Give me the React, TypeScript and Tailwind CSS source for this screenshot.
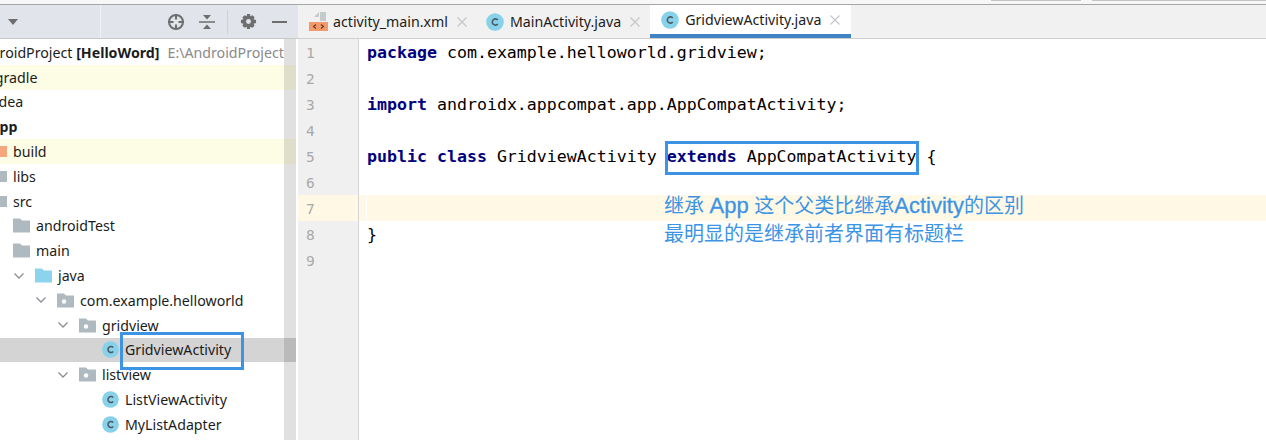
import { ReactNode } from 'react'

const uiFont = { fontFamily: '"Noto Sans", "Liberation Sans", sans-serif' }

function ClassIcon({ size = 17 }: { size?: number }) {
  return (
    <svg width={size} height={size} viewBox="0 0 18 18" className="shrink-0">
      <circle cx="9" cy="9" r="8.8" fill="#87d1ea" />
      <path d="M11.8 7A3.1 3.1 0 1 0 11.8 11" fill="none" stroke="#4d5a60" strokeWidth="1.6" />
    </svg>
  )
}

function Folder({ color = '#afb9c0', dot = false }: { color?: string; dot?: boolean }) {
  return (
    <svg width="17" height="15" viewBox="0 0 17 15" className="shrink-0">
      <path d="M0 0.5H7L9 2.5H17V14.5H0Z" fill={color} />
      {dot && <circle cx="7" cy="8.5" r="2.2" fill="#fff" />}
    </svg>
  )
}

function Chevron() {
  return (
    <svg width="12" height="8" viewBox="0 0 12 8" className="mr-[10px] shrink-0">
      <path d="M1.5 1.5L6 6L10.5 1.5" fill="none" stroke="#8a8f94" strokeWidth="1.3" />
    </svg>
  )
}

function Row({ className, children }: { className: string; children: ReactNode }) {
  return <div className={`flex h-[24.8px] items-center whitespace-nowrap text-[14.2px] text-[#1c1c1c] ${className}`}>{children}</div>
}

function CloseX({ gap }: { gap: string }) {
  return (
    <svg width="10" height="10" viewBox="0 0 10 10" className={`shrink-0 ${gap}`}>
      <path d="M0.5 0.5L9.5 9.5M9.5 0.5L0.5 9.5" stroke="#c4c6c9" strokeWidth="1.2" />
    </svg>
  )
}

function XmlIcon() {
  return (
    <svg width="19" height="19" viewBox="0 0 19 19" className="shrink-0">
      <path d="M5 9V5L10 0V5H5Z" fill="#c5cacd" />
      <rect x="11" y="0" width="6" height="9" fill="#c5cacd" />
      <rect x="0" y="10" width="19" height="9" fill="#f4996b" />
      <path d="M7 12.5L4.5 14.5L7 16.5M12 12.5L14.5 14.5L12 16.5" fill="none" stroke="#5b3a28" strokeWidth="1.1" />
    </svg>
  )
}

function CodeLine({ n, current, children }: { n: number; current?: boolean; children?: ReactNode }) {
  return (
    <div className={`flex h-[26px] ${current ? 'bg-[#fff8e4]' : ''}`}>
      <div className={`h-full w-[61px] shrink-0 border-r-[1px] border-[#d5d5d5] pl-[8px] pt-[1px] text-[14.5px] leading-[26px] text-[#a9a9a9] ${current ? '' : 'bg-[#f0f0f0]'}`}>{n}</div>
      <div className={`h-full w-[8px] shrink-0 border-r-[1px] ${current ? 'border-white' : 'border-transparent'}`} />
      <div className="h-full flex-1 pt-[1px] leading-[26px] whitespace-pre">{children}</div>
    </div>
  )
}

const kw = 'font-bold text-[#000080]'
const latin = 'text-[22px] [-webkit-text-stroke:0.3px_#3d94e4]'

export default function App() {
  return (
    <div className="relative h-[440px] w-[1266px] overflow-hidden bg-white" style={uiFont}>
      {/* top strip, bottoms of the toolbar buttons */}
      <div className="flex h-[5px] items-start border-b-[1px] border-[#a6a6a6] bg-[#f7f7f7]">
        <div className="ml-[991px] h-[1px] w-[90px] bg-[#c4c4c4]" />
        <div className="ml-[11px] h-[1px] flex-1 bg-[#c4c4c4]" />
      </div>
      <div className="flex">
        {/* project panel */}
        <div className="w-[298px] shrink-0">
          <div className="flex h-[34px] items-center border-b-[1px] border-[#c9c9c9] bg-[#e1e4eb]">
            <svg width="10" height="6" viewBox="0 0 10 6" className="ml-[8px]"><path d="M0 0H10L5 6Z" fill="#6e6e6e" /></svg>
            <div className="ml-[82px] h-full w-[1px] bg-[#f0f1f4]" />
            <svg width="18" height="18" viewBox="0 0 18 18" className="ml-[66px]">
              <circle cx="9" cy="9" r="7" fill="none" stroke="#6e6e6e" strokeWidth="2" />
              <path d="M9 1V6.5M9 11.5V17M1 9H6.5M11.5 9H17" stroke="#6e6e6e" strokeWidth="2" />
            </svg>
            <svg width="16" height="16" viewBox="0 0 16 16" className="ml-[14px]">
              <path d="M0 8H16" stroke="#6e6e6e" strokeWidth="1.5" />
              <path d="M4 1H12L8 5.5ZM4 15H12L8 10.5Z" fill="#6e6e6e" />
            </svg>
            <div className="ml-[12px] h-[24px] w-[1px] bg-[#cdd0d6]" />
            <svg width="17" height="17" viewBox="0 0 18 18" className="ml-[12px]">
              <path d="M7.5 1H10.5L11 3.4L13 2.3L15.5 4.6L14.4 6.7L17 7.3V10.7L14.4 11.3L15.5 13.4L13 15.7L11 14.6L10.5 17H7.5L7 14.6L5 15.7L2.5 13.4L3.6 11.3L1 10.7V7.3L3.6 6.7L2.5 4.6L5 2.3L7 3.4Z" fill="#6e6e6e" />
              <circle cx="9" cy="9" r="2.6" fill="#e1e4eb" />
            </svg>
            <div className="ml-[15px] h-[2px] w-[15px] bg-[#6e6e6e]" />
          </div>
          <div className="relative h-[401px] w-[296px] overflow-hidden pt-[1px]">
            <Row className="">
              <span className="-ml-[27px]">AndroidProject <b>[HelloWord]</b></span>
              <span className="ml-[8px] text-[#8a8a8a]">E:\AndroidProject</span>
            </Row>
            <Row className="bg-[#fdfde6]"><span className="-ml-[9px]">.gradle</span></Row>
            <Row className=""><span className="-ml-[9px]">.idea</span></Row>
            <Row className=""><b className="-ml-[9px]">app</b></Row>
            <Row className="bg-[#fdfde6]">
              <span className="h-[11px] w-[7px] bg-[#f4a77a]" />
              <span className="ml-[6px]">build</span>
            </Row>
            <Row className=""><span className="h-[11px] w-[7px] bg-[#afb9c0]" /><span className="ml-[6px]">libs</span></Row>
            <Row className=""><span className="h-[11px] w-[7px] bg-[#afb9c0]" /><span className="ml-[6px]">src</span></Row>
            <Row className="pl-[13px] gap-[6px]"><Folder /><span>androidTest</span></Row>
            <Row className="pl-[13px] gap-[6px]"><Folder /><span>main</span></Row>
            <Row className="pl-[13px]"><Chevron /><Folder color="#8cd3ee" /><span className="ml-[6px]">java</span></Row>
            <Row className="pl-[35px]"><Chevron /><Folder dot /><span className="ml-[6px]">com.example.helloworld</span></Row>
            <Row className="pl-[57px]"><Chevron /><Folder dot /><span className="ml-[6px]">gridview</span></Row>
            <Row className="bg-[#d4d4d4] pl-[102px] gap-[6px]"><ClassIcon /><span>GridviewActivity</span></Row>
            <Row className="pl-[57px]"><Chevron /><Folder dot /><span className="ml-[6px]">listview</span></Row>
            <Row className="pl-[102px] gap-[6px]"><ClassIcon /><span>ListViewActivity</span></Row>
            <Row className="pl-[102px] gap-[6px]"><ClassIcon /><span>MyListAdapter</span></Row>
            {/* scrollbar track sits over the rows */}
            <div className="absolute right-0 top-0 h-full w-[12px] bg-black/[0.12]" />
          </div>
        </div>

        {/* editor */}
        <div className="flex-1">
          <div className="flex h-[34px] items-center border-b-[1px] border-[#d0d0d0] bg-[#f1f1f1] text-[14.2px] text-[#1c1c1c]">
            <div className="ml-[11px]"><XmlIcon /></div>
            <span className="ml-[5px] whitespace-nowrap">activity_main.xml</span>
            <CloseX gap="ml-[9px]" />
            <div className="ml-[19px]"><ClassIcon size={18} /></div>
            <span className="ml-[6px] whitespace-nowrap">MainActivity.java</span>
            <CloseX gap="ml-[9px]" />
            <div className="ml-[10px] flex h-full w-[201px] items-center border-b-[4px] border-[#4083c3] bg-white pl-[11px]">
              <ClassIcon size={18} />
              <span className="ml-[6px] whitespace-nowrap">GridviewActivity.java</span>
              <CloseX gap="ml-[9px]" />
            </div>
          </div>
          <div className="text-[16.6px] text-black" style={{ fontFamily: '"DejaVu Sans Mono", monospace' }}>
            <CodeLine n={1}><span className={kw}>package</span> com.example.helloworld.gridview;</CodeLine>
            <CodeLine n={2} />
            <CodeLine n={3}><span className={kw}>import</span> androidx.appcompat.app.AppCompatActivity;</CodeLine>
            <CodeLine n={4} />
            <CodeLine n={5}><span className={kw}>public class</span> GridviewActivity <span className={kw}>extends</span> AppCompatActivity {'{'}</CodeLine>
            <CodeLine n={6} />
            <CodeLine n={7} current />
            <CodeLine n={8}>{'}'}</CodeLine>
            <CodeLine n={9} />
            <div className="flex h-[180px]"><div className="w-[61px] border-r-[1px] border-[#d5d5d5] bg-[#f0f0f0]" /></div>
          </div>
        </div>
      </div>

      {/* annotations on top of the screenshot */}
      <div className="absolute left-[120px] top-[332px] h-[38px] w-[124px] border-[3px] border-[#3d94e4]" />
      <div className="absolute left-[665px] top-[141px] h-[34px] w-[254px] border-[3px] border-[#3d94e4]" />
      <div
        className="absolute left-[664px] top-[192px] text-[20px] leading-[28px] whitespace-nowrap text-[#3d94e4]"
        style={{ fontFamily: '"Liberation Sans", "Noto Sans CJK SC", sans-serif' }}
      >
        <div>继承 <span className={latin}>App</span> 这个父类比继承<span className={latin}>Activity</span>的区别</div>
        <div>最明显的是继承前者界面有标题栏</div>
      </div>
    </div>
  )
}
